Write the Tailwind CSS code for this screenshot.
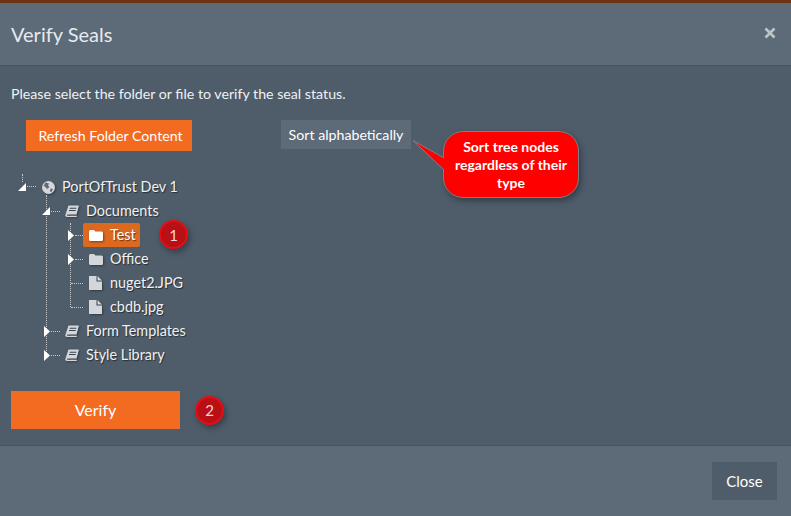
<!DOCTYPE html>
<html lang="en">
<head>
<meta charset="UTF-8">
<title>Verify Seals</title>
<script src="https://cdn.jsdelivr.net/npm/@tailwindcss/browser@4"></script>
</head>
<body class="h-[516px] w-[791px] overflow-hidden bg-[#4f5d6b] font-['Lato',sans-serif] text-[14.2px] text-[#eef1f3]">
  <div class="h-[3px] bg-[#6e3214]"></div>

  <!-- header -->
  <header class="flex h-[63px] items-center justify-between border-b border-[#465360] bg-[#5d6a77] pl-[11px] pr-[15px]">
    <h1 class="text-[20px] leading-6 text-[#e6eaee]">Verify Seals</h1>
    <svg class="mb-[3px] h-[12px] w-[12px]" viewBox="0 0 12 12"><path d="M1.500 1.500l9 9M10.500 1.500l-9 9" stroke="#bdc4ca" stroke-width="2.600" fill="none"/></svg>
  </header>

  <!-- body -->
  <main class="relative h-[379px] px-[11px]">
    <p class="pt-[18px] leading-[20px]">Please select the folder or file to verify the seal status.</p>

    <div class="mt-[16px] flex items-start pl-[15px]">
      <button class="h-[31px] w-[166px] bg-[#f36a21] pl-[3px] text-center text-white">Refresh Folder Content</button>
      <button class="ml-[89px] h-[29px] w-[130px] bg-[#5d6a77] text-center text-white">Sort alphabetically</button>
    </div>

    <!-- callout -->
    <div class="absolute left-[443px] top-[65px] flex h-[67px] w-[136px] items-center justify-center rounded-[20px] border border-[#7a8088] bg-[#ff0000] text-center text-[14px] font-bold leading-[18px] text-white shadow-[2px_3px_6px_rgba(0,0,0,0.35)]">
      <span class="w-[130px]">Sort tree nodes regardless of their type</span>
    </div>
    <svg class="absolute left-[410px] top-[70px] h-[40px] w-[36px]" viewBox="0 0 36 40"><path d="M3 4.500L34 22V34Z" fill="#ff0000"/><path d="M34 22L3 4.500L34 34" fill="none" stroke="#7a8088"/></svg>

    <!-- tree -->
    <div class="relative mt-[24px] text-[14.4px] leading-[24px] [text-shadow:1px_1px_1px_rgba(0,0,0,0.5)]">
      <!-- connector lines -->
      <div class="absolute left-[11px] top-[-1px] h-[8px] border-l border-dotted border-[#c5cbd1]"></div>
      <div class="absolute left-[16px] top-[11px] w-[9px] border-t border-dotted border-[#c5cbd1]"></div>
      <div class="absolute left-[35px] top-[20px] h-[160px] border-l border-dotted border-[#c5cbd1]"></div>
      <div class="absolute left-[59px] top-[48px] h-[84px] border-l border-dotted border-[#c5cbd1]"></div>

      <!-- PortOfTrust Dev 1 -->
      <div class="flex h-[24px] items-center pl-[7px]">
        <svg class="mb-[1px] h-[8px] w-[8px]" viewBox="0 0 8 8"><path d="M8 0V8H0Z" fill="#fff"/></svg>
        <svg class="ml-[16px] h-[13px] w-[13px] drop-shadow-[1px_1px_1px_rgba(0,0,0,0.4)]" viewBox="0 0 13 13"><circle cx="6.500" cy="6.500" r="6.500" fill="#d3d7db"/><path d="M3.500 1.500L7 2.500 6 4.500 7.500 6 5 8 3 5.500 1.500 5ZM8.500 7.500L11 8 9.500 11 8 10.500Z" fill="#5d6a77"/></svg>
        <span class="ml-[7px]">PortOfTrust Dev 1</span>
      </div>

      <!-- Documents -->
      <div class="relative flex h-[24px] items-center pl-[31px]">
        <div class="absolute left-[40px] top-[12px] w-[9px] border-t border-dotted border-[#c5cbd1]"></div>
        <svg class="mb-[1px] h-[8px] w-[8px]" viewBox="0 0 8 8"><path d="M8 0V8H0Z" fill="#fff"/></svg>
        <svg class="ml-[15px] h-[12px] w-[14px] drop-shadow-[1px_1px_1px_rgba(0,0,0,0.4)]" viewBox="0 0 14 12"><path d="M3.500 0.500H14L11.500 9.500H2.700C1.800 9.500 1.800 10.700 2.700 10.700H12L11.600 12H2C0.500 12 0 10.800 0.500 9.500ZM4.800 2.700H11.300V3.700H4.500ZM4.200 5H10.700V6H3.900Z" fill="#d3d7db" fill-rule="evenodd"/></svg>
        <span class="ml-[7px]">Documents</span>
      </div>

      <!-- Test -->
      <div class="relative flex h-[24px] items-center pl-[57px]">
        <div class="absolute left-[64px] top-[12px] w-[8px] border-t border-dotted border-[#c5cbd1]"></div>
        <svg class="h-[11px] w-[6px]" viewBox="0 0 6 11"><path d="M0 0L6 5.500 0 11Z" fill="#fff"/></svg>
        <div class="relative ml-[9px] flex h-[24px] w-[57px] items-center rounded-[2px] bg-[#dd691f] pl-[6px] text-white">
          <svg class="h-[11px] w-[14px] drop-shadow-[1px_1px_1px_rgba(0,0,0,0.4)]" viewBox="0 0 14 11"><path d="M0 1.500Q0 0 1.500 0H5L6.500 1.500H12.500Q14 1.500 14 3V9.500Q14 11 12.500 11H1.500Q0 11 0 9.500Z" fill="#fff"/></svg>
          <span class="ml-[7px]">Test</span>
        </div>
        <div class="absolute left-[148px] top-[-3px] flex h-[29px] w-[29px] items-center justify-center rounded-full border-[2px] border-[#e40f14] bg-[#b91016] text-[15px] text-[#f3d5d6] shadow-[2px_3px_6px_rgba(0,0,0,0.35)] [text-shadow:none]">1</div>
      </div>

      <!-- Office -->
      <div class="relative flex h-[24px] items-center pl-[57px]">
        <div class="absolute left-[64px] top-[12px] w-[8px] border-t border-dotted border-[#c5cbd1]"></div>
        <svg class="h-[11px] w-[6px]" viewBox="0 0 6 11"><path d="M0 0L6 5.500 0 11Z" fill="#fff"/></svg>
        <svg class="ml-[15px] h-[11px] w-[14px] drop-shadow-[1px_1px_1px_rgba(0,0,0,0.4)]" viewBox="0 0 14 11"><path d="M0 1.500Q0 0 1.500 0H5L6.500 1.500H12.500Q14 1.500 14 3V9.500Q14 11 12.500 11H1.500Q0 11 0 9.500Z" fill="#d3d7db"/></svg>
        <span class="ml-[7px]">Office</span>
      </div>

      <!-- nuget2.JPG -->
      <div class="relative flex h-[24px] items-center pl-[78px]">
        <div class="absolute left-[60px] top-[12px] w-[12px] border-t border-dotted border-[#c5cbd1]"></div>
        <svg class="h-[14px] w-[13px] drop-shadow-[1px_1px_1px_rgba(0,0,0,0.4)]" viewBox="0 0 13 14"><path d="M0 0H7.500V5.500H13V14H0ZM8.500 0L13 4.500H8.500Z" fill="#d3d7db"/></svg>
        <span class="ml-[8px]">nuget2.JPG</span>
      </div>

      <!-- cbdb.jpg -->
      <div class="relative flex h-[24px] items-center pl-[78px]">
        <div class="absolute left-[60px] top-[12px] w-[12px] border-t border-dotted border-[#c5cbd1]"></div>
        <svg class="h-[14px] w-[13px] drop-shadow-[1px_1px_1px_rgba(0,0,0,0.4)]" viewBox="0 0 13 14"><path d="M0 0H7.500V5.500H13V14H0ZM8.500 0L13 4.500H8.500Z" fill="#d3d7db"/></svg>
        <span class="ml-[8px]">cbdb.jpg</span>
      </div>

      <!-- Form Templates -->
      <div class="relative flex h-[24px] items-center pl-[33px]">
        <div class="absolute left-[40px] top-[12px] w-[9px] border-t border-dotted border-[#c5cbd1]"></div>
        <svg class="h-[11px] w-[6px]" viewBox="0 0 6 11"><path d="M0 0L6 5.500 0 11Z" fill="#fff"/></svg>
        <svg class="ml-[15px] h-[12px] w-[14px] drop-shadow-[1px_1px_1px_rgba(0,0,0,0.4)]" viewBox="0 0 14 12"><path d="M3.500 0.500H14L11.500 9.500H2.700C1.800 9.500 1.800 10.700 2.700 10.700H12L11.600 12H2C0.500 12 0 10.800 0.500 9.500ZM4.800 2.700H11.300V3.700H4.500ZM4.200 5H10.700V6H3.900Z" fill="#d3d7db" fill-rule="evenodd"/></svg>
        <span class="ml-[7px]">Form Templates</span>
      </div>

      <!-- Style Library -->
      <div class="relative flex h-[24px] items-center pl-[33px]">
        <div class="absolute left-[40px] top-[12px] w-[9px] border-t border-dotted border-[#c5cbd1]"></div>
        <svg class="h-[11px] w-[6px]" viewBox="0 0 6 11"><path d="M0 0L6 5.500 0 11Z" fill="#fff"/></svg>
        <svg class="ml-[15px] h-[12px] w-[14px] drop-shadow-[1px_1px_1px_rgba(0,0,0,0.4)]" viewBox="0 0 14 12"><path d="M3.500 0.500H14L11.500 9.500H2.700C1.800 9.500 1.800 10.700 2.700 10.700H12L11.600 12H2C0.500 12 0 10.800 0.500 9.500ZM4.800 2.700H11.300V3.700H4.500ZM4.200 5H10.700V6H3.900Z" fill="#d3d7db" fill-rule="evenodd"/></svg>
        <span class="ml-[7px]">Style Library</span>
      </div>
    </div>

    <div class="mt-[24px] flex items-center">
      <button class="h-[38px] w-[169px] bg-[#f36a21] text-center text-[16px] text-white">Verify</button>
      <div class="ml-[15px] flex h-[29px] w-[29px] items-center justify-center rounded-full border-[2px] border-[#e40f14] bg-[#b91016] text-[15px] text-[#f3d5d6] shadow-[2px_3px_6px_rgba(0,0,0,0.35)]">2</div>
    </div>
  </main>

  <!-- footer -->
  <footer class="flex h-[71px] items-start justify-end border-t border-[#465360] bg-[#5d6a77] pr-[14px] pt-[16px]">
    <button class="h-[38px] w-[65px] bg-[#4f5d6b] text-center text-[15px] text-white">Close</button>
  </footer>
</body>
</html>
